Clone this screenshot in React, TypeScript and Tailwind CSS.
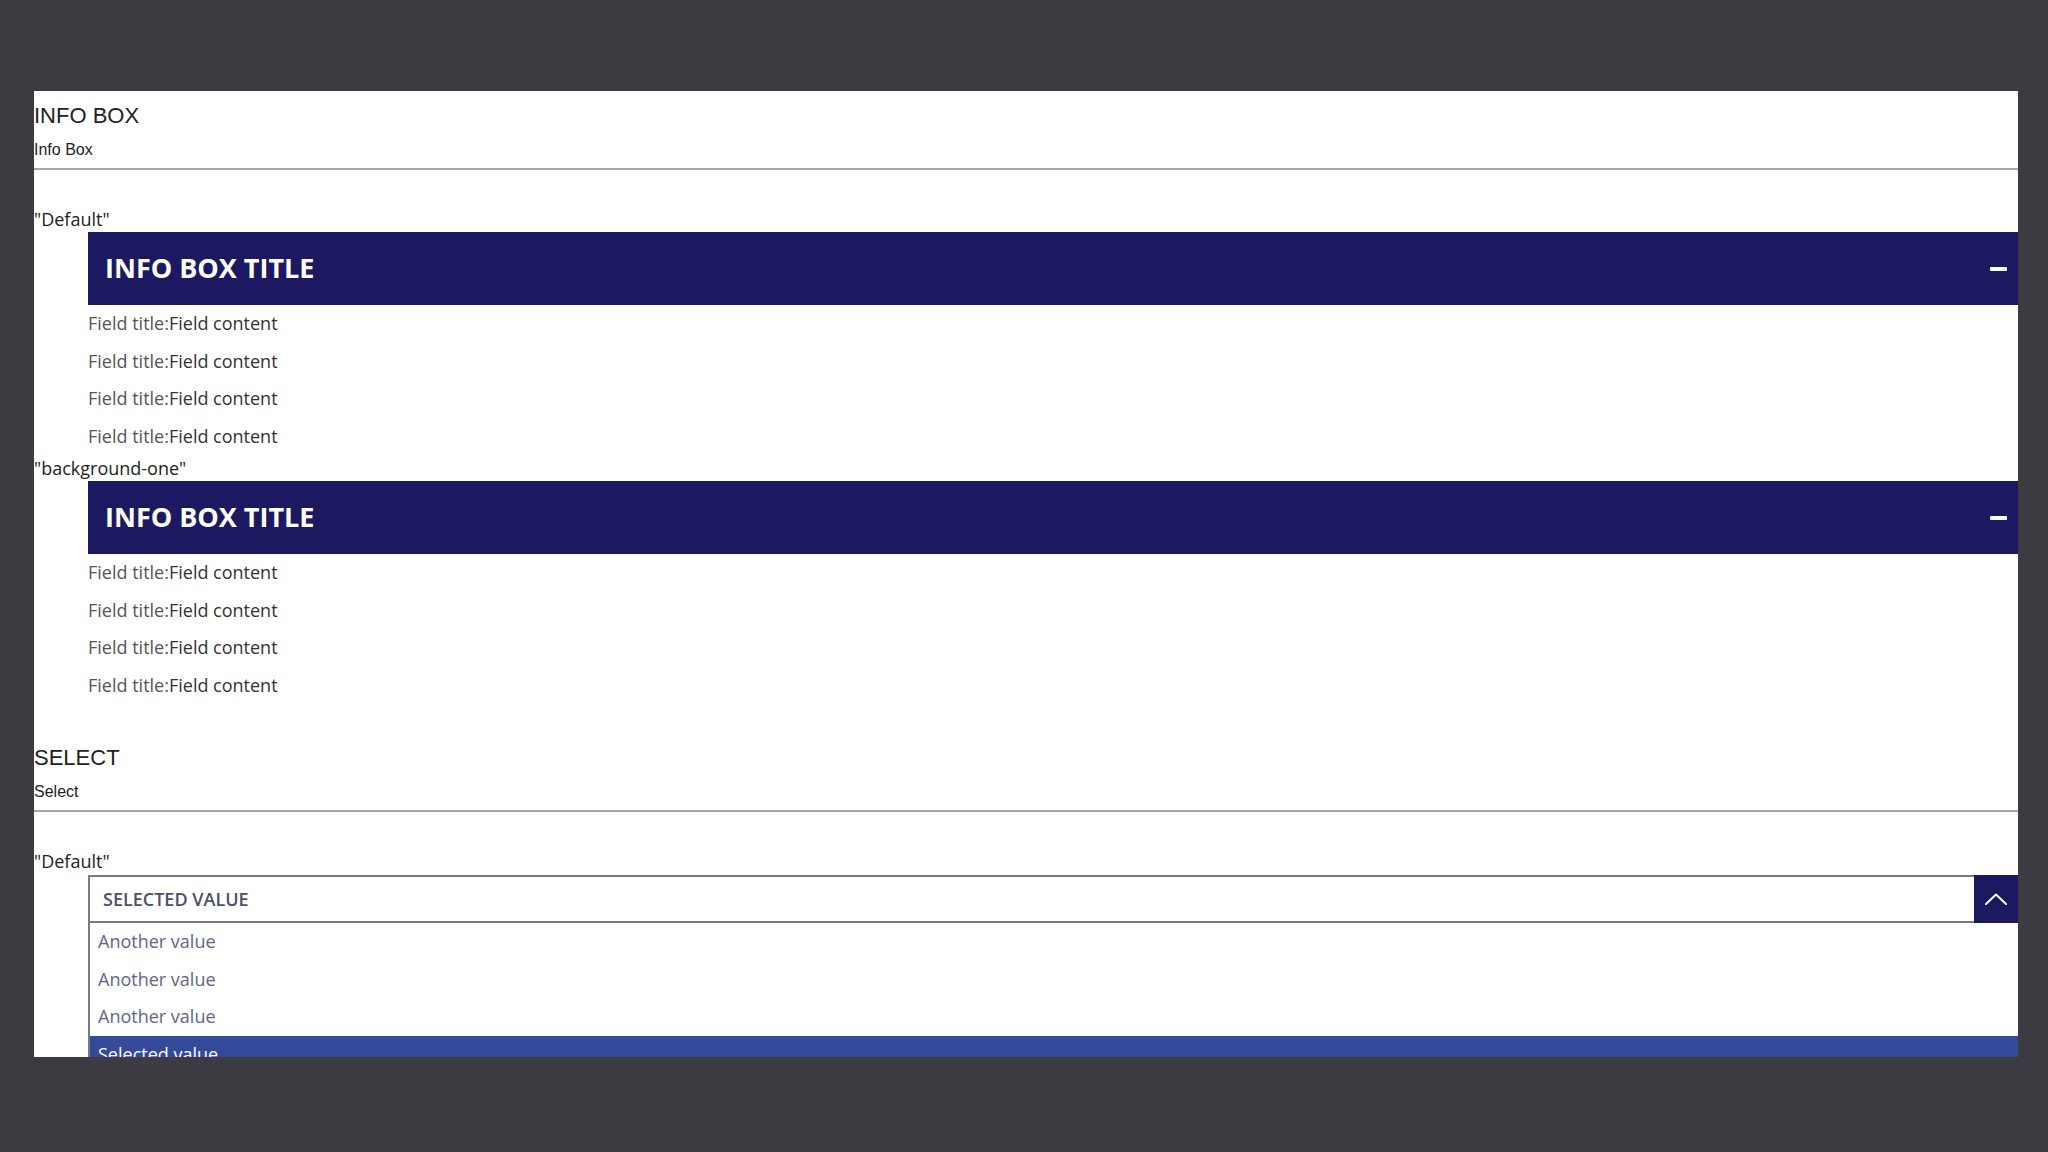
import React from 'react';

const sans = "font-['Liberation_Sans',Arial,sans-serif]";
const open = "font-['Open_Sans',sans-serif]";

const SectionHeader: React.FC<{ title: string; subtitle: string }> = ({ title, subtitle }) => (
  <div className={`${sans} text-[#222]`}>
    <div className="text-[22px] leading-[26px]">{title}</div>
    <div className="mt-[11px] text-[16px] leading-[20px]">{subtitle}</div>
    <div className="mt-[8px] h-[2px] bg-[#a6a6a6]" />
  </div>
);

const VariantLabel: React.FC<{ children: React.ReactNode }> = ({ children }) => (
  <div className={`${open} text-[18px] leading-[26px] text-[#222]`}>{children}</div>
);

const InfoBox: React.FC = () => (
  <div className={`ml-[54px] ${open}`}>
    {/* Title bar */}
    <div className="flex h-[73px] items-center justify-between bg-[#1c1961] pl-[17px] pr-[11px]">
      <span className="text-[27px] font-bold text-white">INFO BOX TITLE</span>
      <span className="block h-[4px] w-[17px] rounded-[1px] bg-white" />
    </div>
    {/* Fields */}
    {[0, 1, 2, 3].map((i) => (
      <div key={i} className="text-[18px] leading-[37.5px]">
        <span className="text-[#555]">Field title:</span>
        <span className="text-[#333]">Field content</span>
      </div>
    ))}
  </div>
);

const SelectBox: React.FC = () => (
  <div className={`ml-[54px] ${open}`}>
    <div className="flex h-[48px] border-y-2 border-l-2 border-[#7a7a7a]">
      <div className="flex flex-1 items-center bg-white pl-[13px] text-[18px] font-semibold text-[#4b4f6e]">
        SELECTED VALUE
      </div>
      <div className="-my-[2px] flex w-[44px] items-center justify-center bg-[#1c1961]">
        <svg width="22" height="12" viewBox="0 0 22 12" fill="none">
          <path d="M1 11 L11 1.5 L21 11" stroke="white" strokeWidth="2" strokeLinecap="round" strokeLinejoin="round" />
        </svg>
      </div>
    </div>
    <div className="border-l-2 border-[#7a7a7a] text-[18px]">
      {['Another value', 'Another value', 'Another value'].map((v, i) => (
        <div key={i} className="pl-[8px] leading-[37.5px] text-[#5f6585]">
          {v}
        </div>
      ))}
      <div className="bg-[#354a9b] pl-[8px] leading-[37.5px] text-white">Selected value</div>
    </div>
  </div>
);

export default function App() {
  return (
    <div className="min-h-[1152px] w-[2048px] bg-[#3c3b42] pt-[91px] pl-[34px] pr-[30px]">
      <div className="h-[966px] overflow-hidden bg-white pt-[12px]">
        {/* Info box section */}
        <SectionHeader title="INFO BOX" subtitle="Info Box" />
        <div className="mt-[36px]">
          <VariantLabel>"Default"</VariantLabel>
          <InfoBox />
          <VariantLabel>"background-one"</VariantLabel>
          <InfoBox />
        </div>

        {/* Select section */}
        <div className="mt-[41px]">
          <SectionHeader title="SELECT" subtitle="Select" />
        </div>
        <div className="mt-[36px]">
          <VariantLabel>"Default"</VariantLabel>
          <div className="mt-[1px]">
            <SelectBox />
          </div>
        </div>
      </div>
    </div>
  );
}
